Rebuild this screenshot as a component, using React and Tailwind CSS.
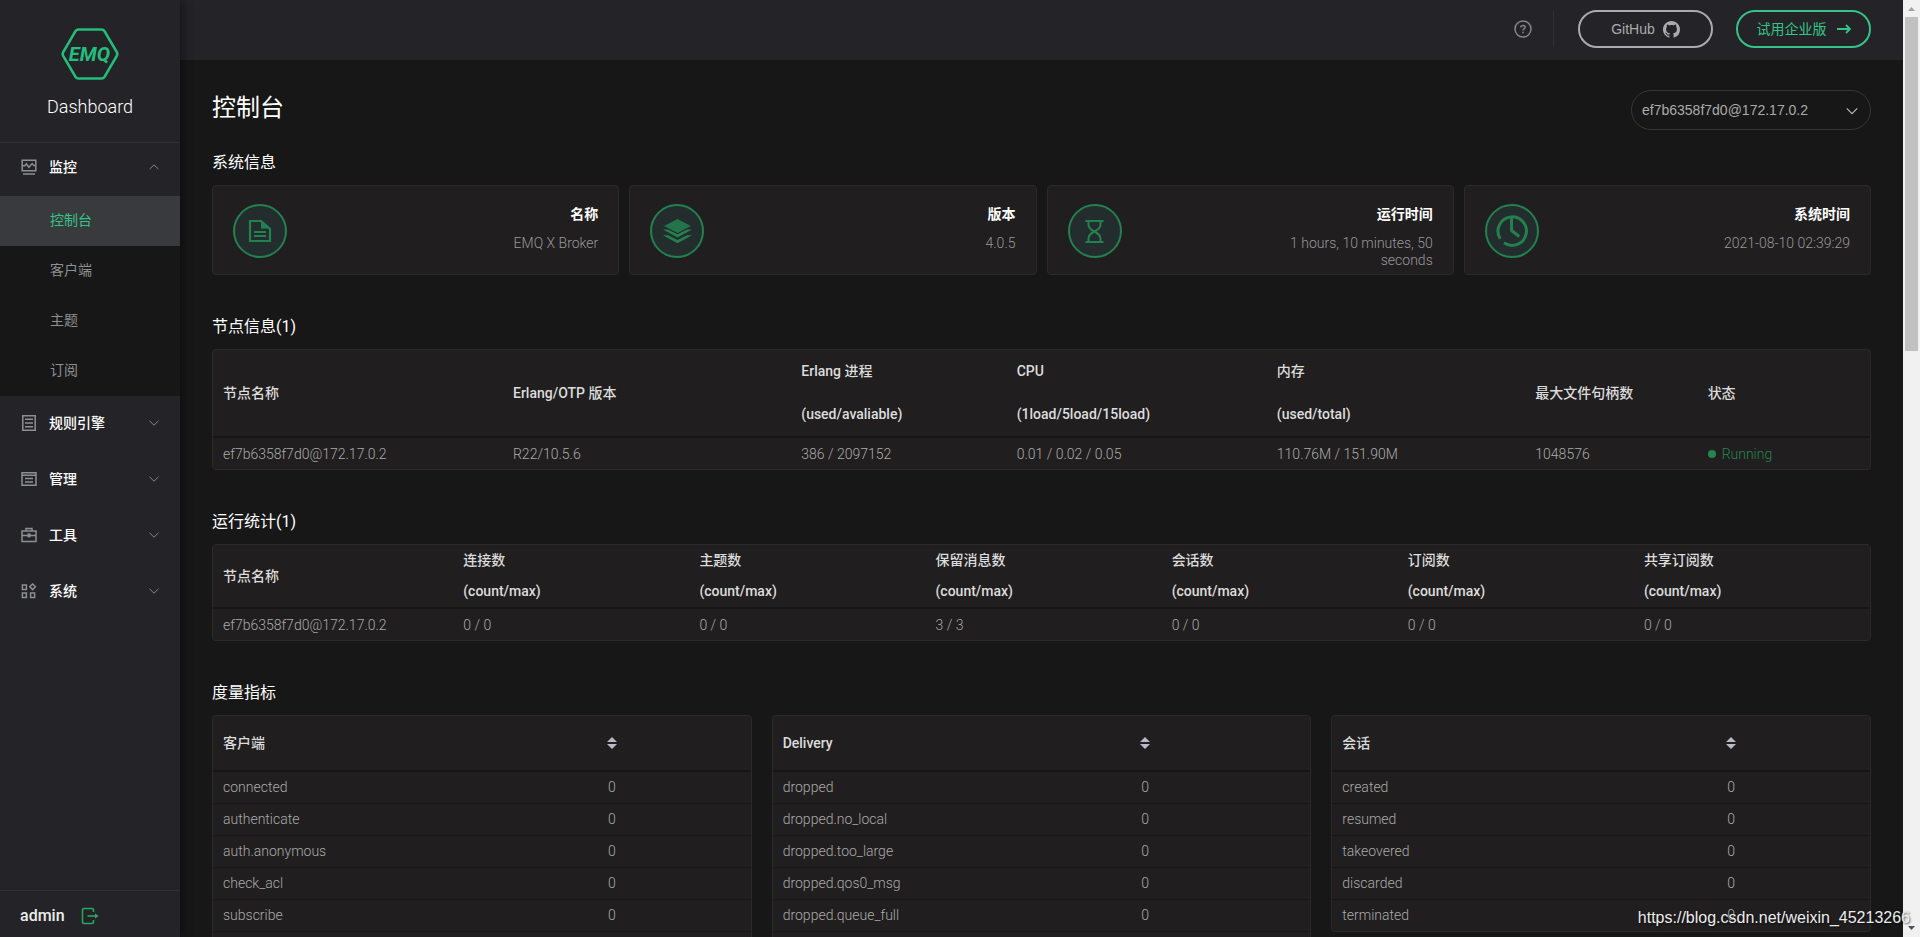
import { useState } from 'react';

const LATIN = 'font-[Roboto,"Noto_Sans_CJK_SC",sans-serif]';
const ARIAL = 'font-["Liberation_Sans","Noto_Sans_CJK_SC",sans-serif]';

const NODE = 'ef7b6358f7d0@172.17.0.2';

const monitorLinks = ['控制台', '客户端', '主题', '订阅'];

const nodeColumns = [
  { title: '节点名称', width: 'w-[17.5%]' },
  { title: 'Erlang/OTP 版本', width: 'w-[17.4%]' },
  { title: 'Erlang 进程', sub: '(used/avaliable)', width: 'w-[13%]' },
  { title: 'CPU', sub: '(1load/5load/15load)', width: 'w-[15.7%]' },
  { title: '内存', sub: '(used/total)', width: 'w-[15.6%]' },
  { title: '最大文件句柄数', width: 'w-[10.4%]' },
  { title: '状态', width: 'w-[10.4%]' },
];

const statColumns = [
  { title: '节点名称', width: 'w-[14.5%]' },
  { title: '连接数', sub: '(count/max)' },
  { title: '主题数', sub: '(count/max)' },
  { title: '保留消息数', sub: '(count/max)' },
  { title: '会话数', sub: '(count/max)' },
  { title: '订阅数', sub: '(count/max)' },
  { title: '共享订阅数', sub: '(count/max)' },
];

const metrics = [
  {
    title: '客户端',
    width: 'w-[71.6%]',
    rows: ['connected', 'authenticate', 'auth.anonymous', 'check_acl', 'subscribe', 'unsubscribe'],
  },
  {
    title: 'Delivery',
    width: 'w-[66.7%]',
    rows: ['dropped', 'dropped.no_local', 'dropped.too_large', 'dropped.qos0_msg', 'dropped.queue_full', 'dropped.expired'],
  },
  {
    title: '会话',
    width: 'w-[71.6%]',
    rows: ['created', 'resumed', 'takeovered', 'discarded', 'terminated'],
  },
];

const Chevron = ({ up, className }) => (
  <svg viewBox="0 0 12 12" className={className} fill="none" stroke="currentColor" aria-hidden="true">
    <path d={up ? 'M1.5 8.2 6 3.8l4.5 4.4' : 'M1.5 3.8 6 8.2l4.5-4.4'} />
  </svg>
);

const MenuIcon = ({ children }) => (
  <svg viewBox="0 0 16 16" className="w-4 h-4 text-[#8d8f96] shrink-0" fill="none" stroke="currentColor" strokeWidth="1.5" aria-hidden="true">
    {children}
  </svg>
);

const MonitorIcon = () => (
  <MenuIcon>
    <path d="M1.2 1.2h13.6v10.6H1.2zM2 15h12" />
    <path d="M1.5 6.8h2.3l1.6-2 2.4 3.4 3.4-3.6 1.6 2h1.6" />
  </MenuIcon>
);

const RuleIcon = () => (
  <MenuIcon>
    <path d="M1.8.8h12.4v14.4H1.8zM4 4.2h8M4 8h8M4 11.8h8" />
  </MenuIcon>
);

const ManageIcon = () => (
  <MenuIcon>
    <path d="M1 1.8h14v12.4H1zM1 4.2h14M4 7.6h8M4 11h8" />
  </MenuIcon>
);

const ToolIcon = () => (
  <MenuIcon>
    <path d="M1 4h14v10.4H1zM5 4V1.4h6V4M1 8.4h14" />
    <path d="M8 6.4v4" strokeWidth="3" />
  </MenuIcon>
);

const SystemIcon = () => (
  <MenuIcon>
    <path d="M1.4 2h4v4.4h-4zM1.4 10h4v4.4h-4zM9.6 10h4v4.4h-4zM11.6 1l2.8 2.8-2.8 2.8-2.8-2.8z" />
  </MenuIcon>
);

const menus = [
  { label: '规则引擎', icon: <RuleIcon /> },
  { label: '管理', icon: <ManageIcon /> },
  { label: '工具', icon: <ToolIcon /> },
  { label: '系统', icon: <SystemIcon /> },
];

const Logo = () => (
  <svg viewBox="0 0 58 52" className="w-[58px] h-[52px]" role="img" aria-label="EMQ">
    <path
      d="M17.5 1.5h23q2 0 3 1.7l12.3 21q1 1.8 0 3.6l-12.3 21q-1 1.7-3 1.7h-23q-2 0-3-1.7L2.2 27.8q-1-1.8 0-3.6l12.3-21q1-1.7 3-1.7z"
      fill="none"
      stroke="#23bd7c"
      strokeWidth="2.6"
    />
    <text x="28.5" y="33" textAnchor="middle" fill="#23bd7c" className="font-[Roboto,sans-serif] text-[20px] font-bold italic">
      EMQ
    </text>
  </svg>
);

const DocIcon = () => (
  <svg viewBox="0 0 54 54" className="w-full h-full" aria-hidden="true">
    <path d="M17 17h11l9 8v12H17z" fill="none" stroke="currentColor" strokeWidth="2.2" />
    <path d="M28 16l10 8.5H28z" fill="currentColor" />
    <path d="M21 28h12M21 32h12" stroke="currentColor" strokeWidth="2.2" />
  </svg>
);

const LayersIcon = () => (
  <svg viewBox="0 0 54 54" className="w-full h-full" fill="currentColor" aria-hidden="true">
    <path d="M27.5 15 41 22l-13.5 7L14 22z" opacity=".85" />
    <path d="M13 25.5h5l9.5 4.8 9.5-4.8h5L27.5 33.5z" />
    <path d="M13 31.3h5l9.5 4.8 9.5-4.8h5L27.5 39.3z" />
  </svg>
);

const HourglassIcon = () => (
  <svg viewBox="0 0 54 54" className="w-full h-full" fill="none" stroke="currentColor" strokeWidth="2" aria-hidden="true">
    <path d="M17.5 17h18M17.5 38h18" strokeWidth="2.2" />
    <path d="M20.5 17v3.5q0 4 5.8 7 6.2-3 6.2-7V17M20.5 38v-3.5q0-4 5.8-7 6.2 3 6.2 7V38" />
  </svg>
);

const ClockIcon = () => (
  <svg viewBox="0 0 54 54" className="w-full h-full" fill="none" stroke="currentColor" strokeWidth="3" aria-hidden="true">
    <path d="M15.2 34.7A14.2 14.2 0 1 1 19 38.7" />
    <path d="M26.5 14v12.5l7.8 6" />
  </svg>
);

const infoCards = [
  { title: '名称', value: 'EMQ X Broker', icon: <DocIcon /> },
  { title: '版本', value: '4.0.5', icon: <LayersIcon /> },
  { title: '运行时间', value: '1 hours, 10 minutes, 50 seconds', icon: <HourglassIcon /> },
  { title: '系统时间', value: '2021-08-10 02:39:29', icon: <ClockIcon /> },
];

const Sidebar = () => {
  const [active, setActive] = useState('控制台');
  const [open, setOpen] = useState(true);

  return (
    <aside className="relative z-10 w-[180px] shrink-0 flex flex-col bg-[#242327] shadow-[2px_0_10px_rgba(0,0,0,0.45)]">
      <div className="h-[143px] shrink-0 flex flex-col items-center pt-7 border-b border-[#2f2f34]">
        <Logo />
        <p className="mt-[15px] text-lg leading-6 font-light text-white">Dashboard</p>
      </div>

      <nav className="-mt-[3px] flex-1 text-sm">
        <button onClick={() => setOpen(!open)} aria-expanded={open} className="w-full h-14 pl-[21px] pr-5 pb-0.5 flex items-center text-white font-medium">
          <MonitorIcon />
          <span className="ml-3 flex-1 text-left">监控</span>
          <Chevron up={open} className="w-3 h-3 text-[#85878c]" />
        </button>
        {open && (
          <ul className="bg-[#171717]">
            {monitorLinks.map((label) => (
              <li key={label}>
                <a
                  href="#"
                  onClick={() => setActive(label)}
                  className={`h-[50px] pl-[50px] pb-0.5 flex items-center ${active === label ? 'bg-[#393a3d] text-[#34c388]' : 'text-[#8f9094]'}`}
                >
                  {label}
                </a>
              </li>
            ))}
          </ul>
        )}
        {menus.map((item) => (
          <button key={item.label} aria-expanded="false" className="w-full h-14 pl-[21px] pr-5 pb-0.5 flex items-center text-white font-medium">
            {item.icon}
            <span className="ml-3 flex-1 text-left">{item.label}</span>
            <Chevron className="w-3 h-3 text-[#85878c]" />
          </button>
        ))}
      </nav>

      <div className="h-[47px] shrink-0 pl-5 pt-1 flex items-center gap-4 border-t border-[#2f2f34]">
        <span className="text-base font-medium text-[#ececec]">admin</span>
        <button aria-label="退出" className="text-[#27a862]">
          <svg viewBox="0 0 18 18" className="w-[18px] h-[18px]" fill="none" stroke="currentColor" strokeWidth="1.5" aria-hidden="true">
            <path d="M12.5 5V3q0-1.5-1.5-1.5H3Q1.5 1.5 1.5 3v12q0 1.5 1.5 1.5h8q1.5 0 1.5-1.5v-2" />
            <path d="M6.5 9H15" strokeWidth="1.6" />
            <path d="m14 6.2 3.5 2.8L14 11.8z" fill="currentColor" stroke="none" />
          </svg>
        </button>
      </div>
    </aside>
  );
};

const TopBar = () => (
  <header className={`h-[60px] shrink-0 pr-8 pb-0.5 flex items-center justify-end bg-[#242327] text-sm ${ARIAL}`}>
    <button aria-label="帮助" className="text-[#85858b]">
      <svg viewBox="0 0 18 18" className="w-[18px] h-[18px]" fill="none" stroke="currentColor" strokeWidth="1.5" aria-hidden="true">
        <circle cx="9" cy="9" r="8" />
        <path d="M6.9 7.5q0-2.1 2.1-2.1t2.1 1.9c0 1.5-2.1 1.5-2.1 3.1M9 11.7v1.5" />
      </svg>
    </button>
    <span className="w-px h-9 ml-[21px] mr-6 bg-[#2f2f34]" />
    <a href="#" className="w-[135px] h-[38px] flex items-center justify-center gap-2 rounded-full border-2 border-[#ababaf] text-[#ababaf]">
      GitHub
      <svg viewBox="0 0 16 16" className="w-[17px] h-[17px]" fill="currentColor" aria-hidden="true">
        <path d="M8 0C3.58 0 0 3.58 0 8c0 3.54 2.29 6.53 5.47 7.59.4.07.55-.17.55-.38 0-.19-.01-.82-.01-1.49-2.01.37-2.53-.49-2.69-.94-.09-.23-.48-.94-.82-1.13-.28-.15-.68-.52-.01-.53.63-.01 1.08.58 1.23.82.72 1.21 1.87.87 2.33.66.07-.52.28-.87.51-1.07-1.78-.2-3.64-.89-3.64-3.95 0-.87.31-1.59.82-2.15-.08-.2-.36-1.02.08-2.12 0 0 .67-.21 2.2.82.64-.18 1.32-.27 2-.27s1.36.09 2 .27c1.53-1.04 2.2-.82 2.2-.82.44 1.1.16 1.92.08 2.12.51.56.82 1.27.82 2.15 0 3.07-1.87 3.75-3.65 3.95.29.25.54.73.54 1.48 0 1.07-.01 1.93-.01 2.2 0 .21.15.46.55.38A8.01 8.01 0 0 0 16 8c0-4.42-3.58-8-8-8z" />
      </svg>
    </a>
    <a href="#" className="ml-[23px] w-[135px] h-[38px] flex items-center justify-center gap-2.5 rounded-full border-2 border-[#34c388] text-[#34c388]">
      试用企业版
      <svg viewBox="0 0 14 10" className="w-3.5 h-2.5" fill="none" stroke="currentColor" strokeWidth="1.8" aria-hidden="true">
        <path d="M0 5h13M9 1l4 4-4 4" />
      </svg>
    </a>
  </header>
);

const SectionTitle = ({ children }) => (
  <h2 className="mb-2.5 text-base leading-6 text-white">{children}</h2>
);

const Panel = ({ children }) => (
  <div className="rounded border border-[#2a2a2b] bg-[#201e1f] overflow-hidden">{children}</div>
);

const InfoTable = ({ columns, leading, cells }) => (
  <Panel>
    <table className="w-full table-fixed text-sm text-left">
      <thead>
        <tr className="border-b-2 border-[#171717] text-[#dcdcdc]">
          {columns.map((col) => (
            <th key={col.title} scope="col" className={`pl-2.5 font-medium ${leading} ${col.width || ''}`}>
              {col.title}
              {col.sub && <span className="block">{col.sub}</span>}
            </th>
          ))}
        </tr>
      </thead>
      <tbody>
        <tr className="h-8 text-[#ababab]">
          {cells.map((cell, i) => (
            <td key={i} className="pl-2.5 font-light">{cell}</td>
          ))}
        </tr>
      </tbody>
    </table>
  </Panel>
);

const MetricTable = ({ title, width, rows }) => (
  <Panel>
    <table className="w-full table-fixed text-sm text-left">
      <thead>
        <tr className="h-[55px] border-b-2 border-[#171717] text-[#dcdcdc]">
          <th scope="col" className={`pl-2.5 font-medium ${width}`}>{title}</th>
          <th scope="col" className="pl-2">
            <button aria-label="排序" className="block text-[#b9bac6]">
              <svg viewBox="0 0 12 14" className="w-3 h-3.5" fill="currentColor" aria-hidden="true">
                <path d="M6 1l5 5H1zM6 13l5-5H1z" />
              </svg>
            </button>
          </th>
        </tr>
      </thead>
      <tbody className="text-[#ababab] font-light">
        {rows.map((row) => (
          <tr key={row} className="h-8 border-b border-[#171717] last:border-b-0">
            <td className="pl-2.5">{row}</td>
            <td className="pl-2.5">0</td>
          </tr>
        ))}
      </tbody>
    </table>
  </Panel>
);

const ScrollTrack = () => (
  <div className="w-[17px] shrink-0 flex flex-col items-center justify-between bg-[#f1f1f1]" aria-hidden="true">
    <div className="w-full flex flex-col items-center">
      <svg viewBox="0 0 17 17" className="w-[17px] h-[17px]" fill="#a3a3a3">
        <path d="M8.5 7 12 11H5z" />
      </svg>
      <div className="w-[13px] h-[334px] bg-[#c1c1c1]" />
    </div>
    <svg viewBox="0 0 17 17" className="w-[17px] h-[17px]" fill="#505050">
      <path d="M8.5 10 12 6H5z" />
    </svg>
  </div>
);

const App = () => {
  const running = (
    <span className="flex items-center gap-1.5 text-[#24854f]">
      <i className="w-2 h-2 rounded-full bg-current" />
      Running
    </span>
  );

  return (
    <div className={`relative h-screen flex overflow-hidden bg-[#171717] ${LATIN}`}>
      <Sidebar />

      <div className="flex-1 min-w-0 flex flex-col">
        <TopBar />
        <main className="flex-1 min-h-0 overflow-hidden px-8 pt-[30px]">
          <div className="mb-[21px] flex items-start justify-between">
            <h1 className="text-2xl leading-9 text-white">控制台</h1>
            <div className="relative">
              <select
                aria-label="节点"
                className={`appearance-none w-[240px] h-10 pl-2.5 pr-8 rounded-full border border-[#37373b] bg-transparent text-sm text-[#ababab] ${ARIAL}`}
              >
                <option>{NODE}</option>
              </select>
              <Chevron className="absolute right-3 top-3.5 w-3.5 h-3.5 text-[#b8b8b8] pointer-events-none" />
            </div>
          </div>

          <section>
            <SectionTitle>系统信息</SectionTitle>
            <div className="grid grid-cols-4 gap-2.5">
              {infoCards.map((card) => (
                <div key={card.title} className="h-[90px] px-5 pt-[18px] flex justify-between rounded border border-[#2a2a2b] bg-[#201e1f]">
                  <div className="w-[54px] h-[54px] rounded-full border-2 border-[#23814f] bg-[#242d2e] text-[#23814f]">
                    <div className="-m-0.5 w-[54px] h-[54px]">{card.icon}</div>
                  </div>
                  <div className="w-[150px] text-right text-sm">
                    <h3 className="leading-5 font-bold text-white">{card.title}</h3>
                    <p className="mt-[11px] leading-[17px] font-light text-[#98989b]">{card.value}</p>
                  </div>
                </div>
              ))}
            </div>
          </section>

          <section className="mt-10">
            <SectionTitle>节点信息(1)</SectionTitle>
            <InfoTable
              columns={nodeColumns}
              leading="leading-[43px]"
              cells={[NODE, 'R22/10.5.6', '386 / 2097152', '0.01 / 0.02 / 0.05', '110.76M / 151.90M', '1048576', running]}
            />
          </section>

          <section className="mt-10">
            <SectionTitle>运行统计(1)</SectionTitle>
            <InfoTable
              columns={statColumns}
              leading="leading-[31px]"
              cells={[NODE, '0 / 0', '0 / 0', '3 / 3', '0 / 0', '0 / 0', '0 / 0']}
            />
          </section>

          <section className="mt-10">
            <SectionTitle>度量指标</SectionTitle>
            <div className="grid grid-cols-3 gap-5 items-start">
              {metrics.map((metric) => (
                <MetricTable key={metric.title} {...metric} />
              ))}
            </div>
          </section>
        </main>
      </div>

      <ScrollTrack />

      <p className={`absolute right-2.5 bottom-[7px] z-20 text-base text-[#ececec] [text-shadow:1px_1px_2px_rgba(0,0,0,0.6)] ${ARIAL}`}>
        https://blog.csdn.net/weixin_45213266
      </p>
    </div>
  );
};

export default App;
